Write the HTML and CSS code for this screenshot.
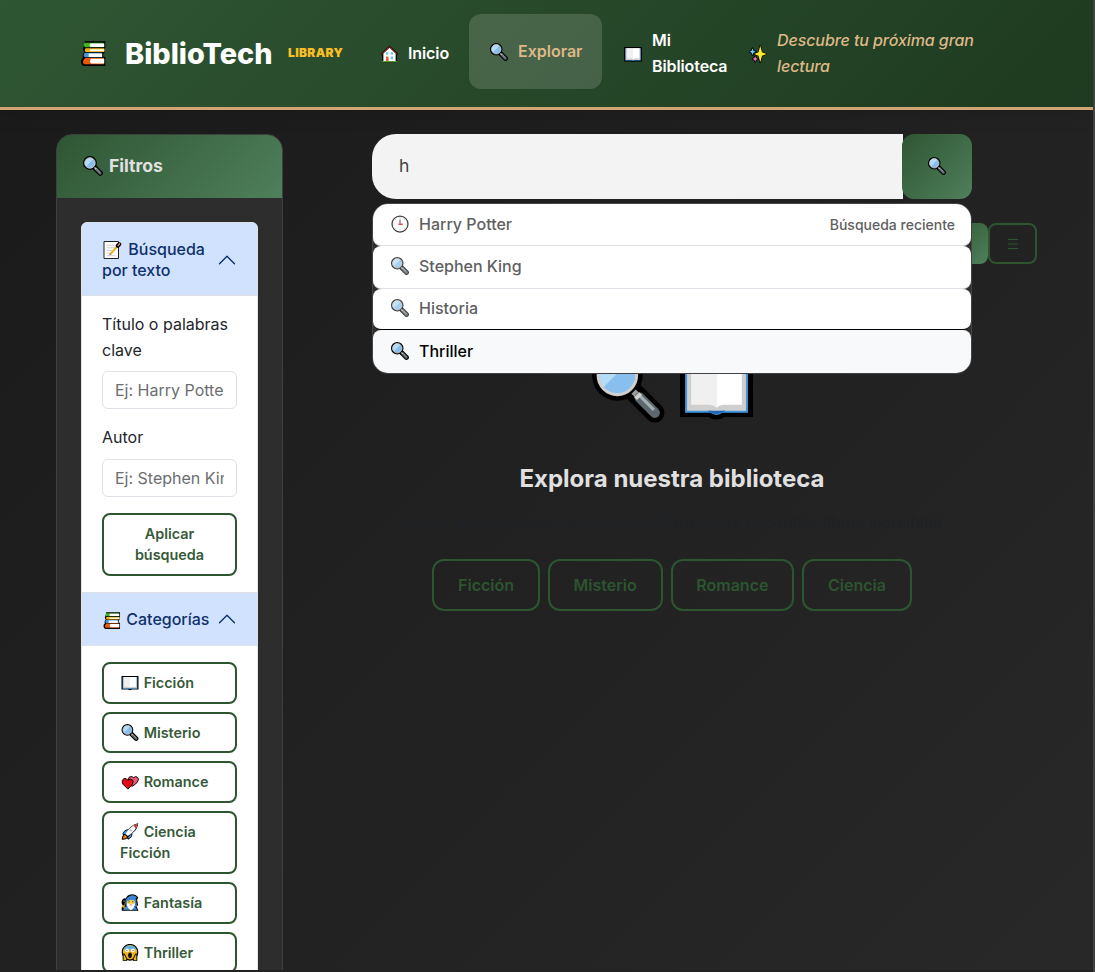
FILE: index.html
```html
<!DOCTYPE html>
<html lang="es">
<head>
<meta charset="utf-8">
<title>BiblioTech</title>
<link rel="stylesheet" href="styles.css">
</head>
<body>
<svg class="defs" width="0" height="0" aria-hidden="true">
  <defs>
    <linearGradient id="lens" x1="0" y1="0" x2="1" y2="1"><stop offset=".47" stop-color="#b3dcf7"/><stop offset=".48" stop-color="#89bfef"/></linearGradient>
    <symbol id="search" viewBox="0 0 72 72">
      <path d="M43 43l19 19" stroke="#000" stroke-width="19" stroke-linecap="round"/>
      <circle cx="25" cy="25" r="25" fill="#000"/>
      <circle cx="25" cy="25" r="19" fill="url(#lens)" stroke="#d0cfce" stroke-width="3"/>
      <path d="M41 41l5 5" stroke="#9b9b9a" stroke-width="6"/>
      <path d="M47 47l15 15" stroke="#5c686d" stroke-width="10" stroke-linecap="round"/>
      <path d="M47 45l14 14" stroke="#a5b0b4" stroke-width="3"/>
      <path d="M43 48l5-5" stroke="#d0cfce" stroke-width="4"/>
    </symbol>
    <symbol id="book" viewBox="0 0 72 72">
      <path d="M0 8h72v58H44q-8 5-16 0H0z" fill="#000"/>
      <path d="M5 13h62v49H42q-6 4-12 0H5z" fill="#4196e0"/>
      <path d="M7 13h58v47H41l-5 2-5-2H7z" fill="#d0cfce"/>
      <path d="M11 13h25v44q-3-3-7-3H11z" fill="#f0f0f0"/>
      <path d="M36 13h25v41H43q-4 0-7 3z" fill="#fff"/>
      <path d="M27 60h18q-9 6-18 0z" fill="#1e65b5"/>
    </symbol>
    <symbol id="books" viewBox="0 0 72 72">
      <path d="M10 1h60v17l-2 4v12l-4 3v8l6 1v26H8q-8-3-8-13 0-8 6-11-3-5 0-12 1-3 4-5-5-3-4-9 0-8 8-10" fill="#000"/>
      <path d="M12 5h53v13H12q-8-6 0-13z" fill="#3fb522"/><path d="M27 7h40v10H27q-5-5 0-10z" fill="#fff"/>
      <path d="M13 21h54v11H13q-5-5 0-11z" fill="#f1b31c"/><path d="M26 24h41v5H26z" fill="#fff"/>
      <path d="M10 34h50v13H12q-8-4-2-13z" fill="#4c92d4"/><path d="M22 36h39v10H22z" fill="#fff"/>
      <path d="M12 49h54v18H9q-8-7 3-18z" fill="#e8590c"/><path d="M29 51h38v14H29q-6-7 0-14z" fill="#fff"/>
    </symbol>
    <symbol id="house" viewBox="0 0 72 72">
      <path d="M36 0l36 35-5 7v30H5V42l-5-7z" fill="#000"/><path d="M10 34L36 10l26 24v33H10z" fill="#fff"/>
      <path d="M5 36L36 6l31 30" fill="none" stroke="#d22f27" stroke-width="4"/>
      <path d="M21 29h10v9H21zm20 0h10v9H41zm0 18h10v11H41z" fill="#61c8f0"/><path d="M21 47h11v20H21z" fill="#ea5a47"/><path d="M4 66h64v5H4z" fill="#5c9e31"/>
    </symbol>
    <symbol id="sparkles" viewBox="0 0 72 72">
      <g stroke="#000" stroke-width="7" stroke-linejoin="round"><path d="M45 5l6 25 19 6-19 6-6 26-6-26-17-6 17-6z"/><path d="M14 13l4 10 9 4-9 4-4 9-4-9-8-4 8-4zM25 45l3 7 8 4-8 3-3 8-4-8-7-3 7-4z"/></g>
      <path d="M45 3l7 26 19 7-19 7-7 26-7-26-17-7 17-7z" fill="#fcea2b"/><path d="M14 13l4 10 9 4-9 4-4 9-4-9-8-4 8-4z" fill="#61c8f0"/><path d="M25 45l3 7 8 4-8 3-3 8-4-8-7-3 7-4z" fill="#e67ab4"/>
    </symbol>
    <symbol id="memo" viewBox="0 0 72 72">
      <path d="M2 2h58v68H2z" fill="#fff" stroke="#222" stroke-width="4"/><path d="M12 17h31M12 27h36M12 38h24M12 48h20M12 59h36" stroke="#d0cfce" stroke-width="4"/>
      <path d="M29 51L58 18" stroke="#f1b31c" stroke-width="8"/><path d="M23 57l3-9 6 6z" fill="#8a6a3a"/><path d="M57 19l6-6" stroke="#000" stroke-width="16" stroke-linecap="round"/><path d="M59 17l5-5" stroke="#d98880" stroke-width="7" stroke-linecap="round"/>
    </symbol>
    <symbol id="clock" viewBox="0 0 72 72"><circle cx="36" cy="36" r="32" fill="#fff" stroke="#000" stroke-width="5"/><path d="M36 9v5M36 58v5M9 36h5M58 36h5M17 17l3 3M55 17l-3 3M17 55l3-3M55 55l-3-3" stroke="#999" stroke-width="3"/><path d="M36 18v20" stroke="#222" stroke-width="4"/><path d="M30 37h17" stroke="#e5091a" stroke-width="6"/></symbol>
    <symbol id="hearts" viewBox="0 0 72 72">
      <path d="M44 53L28 28Q27 11 42 11q6 0 9 5 9-9 17-2 10 12-9 29z" fill="#ea5a74" stroke="#000" stroke-width="4"/>
      <path d="M27 64L6 43Q-2 25 12 19q9-2 14 7 12-10 22 1 6 13-21 37z" fill="#e5091a" stroke="#000" stroke-width="4"/>
    </symbol>
    <symbol id="rocket" viewBox="0 0 72 72">
      <path d="M1 71q0-15 6-20-8-5 7-19 7-6 15-6Q46 5 71 1q-2 26-25 42 2 13-12 24l-5 4-5-5q-7 5-23 5z" fill="#000"/>
      <path d="M7 46q4-14 22-16L20 48zm18 19l17-21q3 12-11 21z" fill="#4196e0"/><path d="M17 47Q34 12 68 4q-4 27-41 51z" fill="#fff"/><path d="M49 12l18-8-6 20q-3-8-12-12z" fill="#d22f27"/><circle cx="40" cy="31" r="5" fill="#b9c6cc"/><path d="M5 67q1-12 8-17l11 11q-4 5-19 6z" fill="#e8590c"/><path d="M10 63l6-11 6 6z" fill="#f1b31c"/>
    </symbol>
    <symbol id="mage" viewBox="0 0 72 72">
      <path d="M1 71V56l6-6Q-4 40 3 25q5-9 15-6Q24 4 38 2q20-5 33 12l-5 11 4 20-5 10 7 16z" fill="#000"/>
      <path d="M8 67q1-13 18-14h20q17 1 20 14z" fill="#4196e0"/><path d="M18 28q22-12 44 0l4 26H18z" fill="#3d85cf"/><path d="M24 26q20-8 32 2v22H24z" fill="#fcd34d"/><path d="M16 26q9-16 24-20 14-2 26 8l-7 5 5 8-5 3q-13-9-34 0z" fill="#3d85cf"/><path d="M23 38q-2 22 17 31 17-9 17-31l-8 5-9-3-9 3z" fill="#fff"/><path d="M35 46h10" stroke="#d22f27" stroke-width="3"/><path d="M30 33h4m12 0h4" stroke="#000" stroke-width="4"/><path d="M7 30q9-4 9 6-3 9-4 17v14" fill="none" stroke="#a57939" stroke-width="4"/><circle cx="8" cy="53" r="5" fill="#f1b31c"/>
    </symbol>
    <symbol id="scream" viewBox="0 0 72 72">
      <circle cx="36" cy="35" r="33" fill="#f1b31c" stroke="#000" stroke-width="5"/><path d="M8 23q6-16 28-17 22 1 28 17z" fill="#61b2e4"/><circle cx="24" cy="27" r="8" fill="#fff"/><circle cx="48" cy="27" r="8" fill="#fff"/><path d="M23 26v3m26-3v3" stroke="#000" stroke-width="4"/><ellipse cx="36" cy="48" rx="8" ry="12" fill="#111"/><path d="M7 71V46q0-6 5-4l10 20v9zm58 0V46q0-6-5-4L50 62v9z" fill="#f1b31c" stroke="#000" stroke-width="4"/>
    </symbol>
  </defs>
</svg>
<div class="page">
  <header class="navbar">
    <a class="brand"><svg class="brand-icon"><use href="#books"/></svg><span class="brand-name">BiblioTech</span><span class="brand-tag">LIBRARY</span></a>
    <nav class="nav">
      <a class="nav-link home"><svg class="nav-icon small"><use href="#house"/></svg>Inicio</a>
      <a class="nav-link active"><svg class="nav-icon"><use href="#search"/></svg>Explorar</a>
      <a class="nav-link library"><svg class="nav-icon"><use href="#book"/></svg><span>Mi<br>Biblioteca</span></a>
    </nav>
    <div class="tagline"><svg class="nav-icon"><use href="#sparkles"/></svg><em>Descubre tu próxima gran lectura</em></div>
  </header>
  <div class="layout">
    <aside class="filters">
      <h2 class="filters-head"><svg class="filters-icon"><use href="#search"/></svg>Filtros</h2>
      <div class="filters-body">
        <div class="accordion">
          <div class="acc-head"><span><svg class="emoji"><use href="#memo"/></svg> Búsqueda por texto</span><svg class="chevron" viewBox="0 0 16 16"><path d="M2 11l6-6 6 6"/></svg></div>
          <div class="acc-body">
            <label class="label">Título o palabras clave</label>
            <input class="field" placeholder="Ej: Harry Potter">
            <label class="label">Autor</label>
            <input class="field" placeholder="Ej: Stephen King">
            <button class="btn apply">Aplicar búsqueda</button>
          </div>
          <div class="acc-head second"><span class="nowrap"><svg class="emoji cat"><use href="#books"/></svg> Categorías</span><svg class="chevron" viewBox="0 0 16 16"><path d="M2 11l6-6 6 6"/></svg></div>
          <div class="acc-body categories">
            <button class="btn"><svg class="emoji"><use href="#book"/></svg> Ficción</button>
            <button class="btn"><svg class="emoji"><use href="#search"/></svg> Misterio</button>
            <button class="btn"><svg class="emoji"><use href="#hearts"/></svg> Romance</button>
            <button class="btn"><svg class="emoji"><use href="#rocket"/></svg> Ciencia Ficción</button>
            <button class="btn"><svg class="emoji"><use href="#mage"/></svg> Fantasía</button>
            <button class="btn"><svg class="emoji"><use href="#scream"/></svg> Thriller</button>
          </div>
        </div>
      </div>
    </aside>
    <main class="content">
      <div class="search">
        <input class="search-input" value="h">
        <button class="search-btn"><svg class="nav-icon"><use href="#search"/></svg></button>
        <ul class="suggestions">
          <li><svg><use href="#clock"/></svg><span>Harry Potter</span><small>Búsqueda reciente</small></li>
          <li><svg><use href="#search"/></svg><span>Stephen King</span></li>
          <li><svg><use href="#search"/></svg><span>Historia</span></li>
          <li class="selected"><svg><use href="#search"/></svg><span>Thriller</span></li>
        </ul>
      </div>
      <div class="view-toggle"><span class="view grid"></span><span class="view list"><svg width="12" height="12" viewBox="0 0 12 12"><path d="M1 1.500h10M1 6h10M1 10.500h10"/></svg></span></div>
      <section class="empty">
        <div class="empty-icons"><svg><use href="#search"/></svg><svg><use href="#book"/></svg></div>
        <h1>Explora nuestra biblioteca</h1>
        <p>Utiliza la barra de búsqueda o los filtros para encontrar libros increíbles</p>
        <div class="quick"><button>Ficción</button><button>Misterio</button><button>Romance</button><button>Ciencia</button></div>
      </section>
    </main>
  </div>
</div>
</body>
</html>
```
FILE: styles.css
```css
* { box-sizing: border-box; }
body { margin: 0; height: 972px; overflow: hidden; background: #222; border-right: 2px solid #414141; font: 16px/1.6 Inter, sans-serif; color: #212529; }
.defs { position: absolute; }
button, input { font-family: inherit; }
.page { height: 970px; overflow: hidden; background: linear-gradient(135deg, #1a1a1a, #282828); }
.navbar { height: 110px; display: flex; align-items: center; padding-left: 81px; border-bottom: 3px solid #d4a574; background: linear-gradient(135deg, #2f5633, #1e3a20); color: #fff; box-shadow: 0 4px 20px rgba(0,0,0,.12); }
.brand { display: flex; align-items: center; width: 300px; flex: none; }
.brand-icon { width: 25px; height: 25px; margin-right: 19px; flex: none; }
.brand-name { font-size: 28.8px; font-weight: 800; letter-spacing: 0; line-height: 40px; width: 163px; }
.brand-tag { font-size: 12px; font-weight: 900; letter-spacing: .35px; margin-bottom: 2px; color: #fbbf24; }
.nav { display: flex; align-items: center; flex: none; font-weight: 600; letter-spacing: -.1px; }
.nav-link { display: flex; align-items: center; }
.nav-icon { width: 18px; height: 18px; margin-right: 10px; flex: none; }
.nav-icon.small { width: 17px; }
.home { width: 88px; }
.active { width: 133px; height: 75px; margin-bottom: 4px; padding-left: 21px; border-radius: 12px; background: rgba(255,255,255,.15); color: #deb887; letter-spacing: 0; }
.library { width: 125px; margin-left: 22px; }
.tagline { display: flex; align-items: center; width: 240px; color: #deb887; font-weight: 500; letter-spacing: -.08px; }
.layout { display: flex; align-items: flex-start; padding: 24px 56px 0; }
.filters { width: 227px; height: 900px; flex: none; border: 1px solid #404040; border-radius: 16px; background: #2d2d2d; overflow: hidden; }
.filters-head { height: 63px; margin: 0; padding-left: 26px; display: flex; align-items: center; font-size: 17.6px; font-weight: 700; color: #e0e0e0; background: linear-gradient(135deg, #2f5633, #4f7f5b); }
.filters-icon { width: 20px; height: 20px; margin: -1px 6px 0 0; }
.filters-body { padding: 24px; }
.accordion { background: #fff; border: 1px solid #dee2e6; border-radius: 6px; overflow: hidden; }
.acc-head { display: flex; align-items: center; justify-content: space-between; height: 73px; padding: 16px 20px 15px; line-height: 21px; background: #d1e2ff; color: #10316b; font-weight: 500; border-bottom: 1px solid #dee2e6; }
.acc-head.second { height: 54px; border-top: 1px solid #dee2e6; }
.nowrap { white-space: nowrap; }
.chevron { width: 20px; height: 20px; flex: none; fill: none; stroke: #052c65; stroke-linecap: round; stroke-linejoin: round; }
.emoji { width: 18px; height: 17px; margin: 0 1px; vertical-align: -4px; }
.btn .emoji { margin-top: -1px; vertical-align: -3.5px; }
.acc-head .emoji { width: 19px; height: 18px; margin-right: 2px; }
.acc-head .emoji.cat { width: 18px; height: 17px; margin-right: 1px; }
.acc-body { padding: 16px 20px; }
.label { display: block; line-height: 25.6px; margin-bottom: 8px; }
.field { display: block; width: 100%; height: 38px; padding: 6px 12px; margin-bottom: 16px; border: 1px solid #dee2e6; border-radius: 6px; font-size: 16px; }
.field::placeholder { color: #6b6e71; }
.btn { display: block; width: 100%; margin: 0 0 8px; padding: 8px 16px; border: 2px solid #2c5530; border-radius: 8px; background: #fff; color: #365a39; font-size: 14.4px; font-weight: 600; line-height: 21.6px; text-align: left; }
.btn.apply { text-align: center; margin: 0; }
.content { width: 600px; margin-left: 89px; flex: none; }
.search { position: relative; display: flex; height: 65px; z-index: 2; }
.search-input { width: 531px; padding: 0 27px 2px; border: 0; border-radius: 24px 0 0 24px; background: #f3f3f3; color: #444; font-size: 17.6px; outline: 0; }
.search-btn { width: 70px; margin-left: -1px; border: 0; border-radius: 12px; background: linear-gradient(135deg, #2f5633, #4f7f5b); }
.search-btn .nav-icon { margin: 1px 0 0; }
.suggestions { position: absolute; top: 69px; left: 0; width: 600px; height: 171px; margin: 0; padding: 0; list-style: none; overflow: hidden; background: #303030; border: 1px solid #444; border-radius: 16px; }
.suggestions li { display: flex; align-items: center; height: 42.4px; padding: 0 16px 0 18px; border-bottom: 1px solid #dee2e6; border-radius: 8px; background: #fff; color: #5f6061; font-weight: 500; }
.suggestions li:nth-child(2) { padding-bottom: 1px; }
.suggestions li:nth-child(3) { height: 41.4px; border-bottom-color: #000; }
.suggestions li.selected { height: 43px; background: #f8f9fa; color: #000; border: 0; }
.suggestions svg { width: 18px; height: 18px; margin-right: 10px; margin-bottom: 1px; opacity: .75; }
.suggestions .selected svg { opacity: 1; }
.suggestions small { margin-left: auto; font-size: 14px; }
.view-toggle { display: flex; justify-content: flex-end; width: 665px; height: 41px; margin-top: 24px; }
.view { width: 49px; border: 2px solid #2c5530; border-radius: 8px; display: flex; align-items: center; justify-content: center; }
.view.grid { border: 0; background: linear-gradient(135deg, #2c5530, #4f7f5b); }
.view path { stroke: #2c5530; }
.empty { display: flex; flex-direction: column; align-items: center; padding-top: 86px; }
.empty-icons { display: flex; gap: 15px; height: 73px; }
.empty-icons svg { width: 73px; height: 73px; }
.empty h1 { margin: 36px 0 0; font-size: 24px; line-height: 39px; font-weight: 700; color: #e0e0e0; white-space: nowrap; }
.empty p { margin: 12px 0 23px; line-height: 25.6px; color: #1e2226; white-space: nowrap; }
.quick { display: flex; gap: 8px; }
.quick button { height: 52px; padding: 0 23.800px; border: 2px solid #2c5530; border-radius: 12px; background: none; color: #2c5530; font-size: 16px; font-weight: 600; white-space: nowrap; }
```
